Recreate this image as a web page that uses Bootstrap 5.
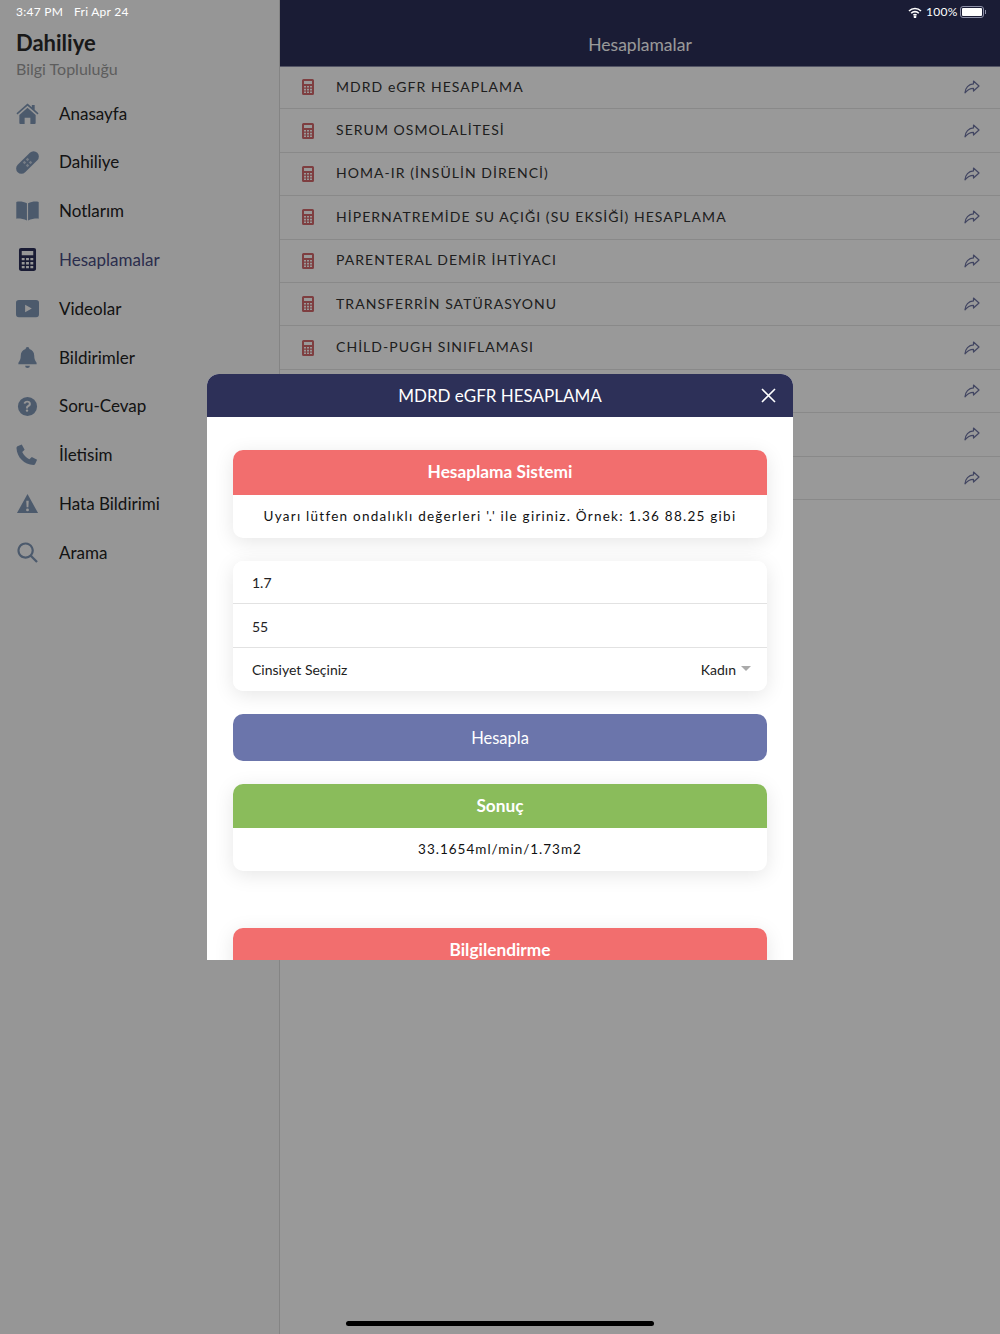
<!DOCTYPE html>
<html lang="tr">
<head>
  <meta charset="UTF-8" />
  <meta name="viewport" content="width=device-width, initial-scale=1.0" />
  <title>Dahiliye</title>
  <link href="https://cdn.jsdelivr.net/npm/bootstrap@5.3.3/dist/css/bootstrap.min.css" rel="stylesheet" />
  <style>
    html, body { height: 100%; }
    body { font-family: "Lato", "Noto Sans", sans-serif; color: #2b2b2b; background: #fff; overflow: hidden; }
    .app-shell { height: 1334px; position: relative; }

    /* left menu */
    .side-menu { width: 280px; background: #fafafa; border-right: 1px solid #dcdcdc; padding-top: 30px; flex-shrink: 0; }
    .side-title { font-size: 22px; font-weight: 700; line-height: 26px; padding-left: 16px; }
    .side-sub { font-size: 16px; line-height: 26px; color: #9c9c9c; padding-left: 16px; margin-bottom: 7px; }
    .side-item { height: 48.8px; padding-left: 16px; font-size: 17px; color: #222; }
    .side-item svg { width: 23px; height: 23px; fill: #7f96b5; margin-right: 20px; flex-shrink: 0; }
    .side-item.is-active { color: #484c80; }
    .side-item.is-active svg { fill: #2c3059; }

    /* right pane */
    .top-head { height: 66px; background: #2c3059; color: #fff; font-size: 17.5px; padding-top: 34px; line-height: 22px; text-align: center; box-shadow: 0 1px 0 #8a8ca8; }
    .calc-row { height: 43.4px; border-bottom: 1px solid #e4e4e4; background: #fff; padding: 0 20px 0 22px; font-size: 14px; letter-spacing: 1.05px; color: #333; }
    .calc-row .calc-icon { width: 12px; height: 16px; fill: #d2686c; margin-right: 22px; flex-shrink: 0; }
    .calc-row .share-icon { width: 16px; height: 14px; fill: none; stroke: #6f75a3; stroke-width: 1.2; stroke-linejoin: round; margin-left: auto; }
    .calc-name { margin-bottom: 2px; }

    /* overlay */
    .dim-layer { position: absolute; inset: 0; background: rgba(0, 0, 0, .4); }
    .status-row { position: absolute; top: 0; left: 16px; right: 0; height: 24px; color: #fff; font-size: 12px; letter-spacing: .25px; }
    .status-date { margin-left: 11px; }
    .batt { width: 24px; height: 12px; border: 1px solid #8d90a8; border-radius: 3px; padding: 1px; margin-left: 2px; }
    .batt span { display: block; height: 100%; background: #fff; border-radius: 1px; }
    .batt-tip { width: 1.5px; height: 4px; background: #8d90a8; margin: 0 14px 0 1px; }
    .home-bar { position: absolute; left: 346px; bottom: 8px; width: 308px; height: 5px; border-radius: 3px; background: #000; }

    /* modal */
    .calc-modal { width: 586px; height: 586px; background: #fff; border-radius: 12px 12px 0 0; overflow: hidden; }
    .calc-modal-head { height: 43px; background: #2d3058; color: #fff; font-size: 17px; position: relative; }
    .close-x { position: absolute; right: 17px; top: 14px; width: 15px; height: 15px; stroke: #fff; stroke-width: 1.6; }
    .calc-modal-body { padding: 33px 26px 0; }
    .pane { border: 0; border-radius: 10px; box-shadow: 0 4px 20px rgba(0, 0, 0, .1); margin-bottom: 23px; overflow: hidden; }
    .pane-head { height: 45px; color: #fff; font-size: 17.3px; font-weight: 700; }
    .pane-coral { background: #f26e6e; padding-bottom: 1px; }
    .pane-green { background: #8abc5b; height: 44px; }
    .pane-text { height: 43px; font-size: 13.5px; letter-spacing: 1.25px; color: #111; }
    .pane-result { letter-spacing: 1px; padding-bottom: 1px; }
    .field-row { height: 43.4px; padding: 1px 16px 0 19px; font-size: 14px; color: #222; border-color: #e2e2e2; }
    .caret-down { width: 0; height: 0; border-left: 5px solid transparent; border-right: 5px solid transparent; border-top: 5px solid #aaa; margin-left: 5px; margin-bottom: 2px; }
    .calc-btn { height: 47px; background: #6b75ab; border: 0; border-radius: 10px; color: #fff; font-size: 16.5px; margin-bottom: 23px; padding-top: 8px; }
    .calc-btn:hover { background: #6b75ab; color: #fff; }
    .gap-after { margin-bottom: 57px; }
  </style>
</head>
<body>
  <svg class="d-none">
    <symbol id="i-calc" viewBox="0 0 12 16"><path d="M1.5 0h9A1.5 1.5 0 0 1 12 1.5v13a1.5 1.5 0 0 1-1.500 1.500h-9A1.500 1.500 0 0 1 0 14.500v-13A1.500 1.500 0 0 1 1.500 0zM2 2v3h8V2zM2 7v1.600h2V7zm3 0v1.600h2V7zm3 0v1.600h2V7zM2 9.800v1.600h2V9.800zm3 0v1.600h2V9.800zm3 0v1.600h2V9.800zM2 12.500v1.500h2v-1.500zm3 0v1.500h2v-1.500zm3 0v1.500h2v-1.500z" fill-rule="evenodd"/></symbol>
    <symbol id="i-share" viewBox="0 0 16 14"><path d="M9.500 1L15 6l-5.500 5V8.300C6 8.300 3.500 9.500 1 12.800 1.300 8 4.500 4.200 9.500 3.900z"/></symbol>
  </svg>

  <div class="app-shell d-flex">
    <nav class="side-menu">
      <div class="side-title">Dahiliye</div>
      <div class="side-sub">Bilgi Topluluğu</div>
      <div class="side-item d-flex align-items-center">
        <svg viewBox="0 0 24 24"><path d="M12 1.500l4.500 4V3h3v5.200l4 3.600-1 1.200L12 4 1.500 13l-1-1.200zM3.500 13.500L12 6l8.500 7.500V22a1 1 0 0 1-1 1H15v-6.500H9V23H4.500a1 1 0 0 1-1-1z"/></svg>Anasayfa
      </div>
      <div class="side-item d-flex align-items-center">
        <svg viewBox="0 0 24 24"><g transform="rotate(-45 12 12)"><rect x="-2.500" y="6.500" width="29" height="11" rx="5.500"/><g fill="#c5d0de"><rect x="8.500" y="8.500" width="2.500" height="2.500"/><rect x="13" y="8.500" width="2.500" height="2.500"/><rect x="8.500" y="13" width="2.500" height="2.500"/><rect x="13" y="13" width="2.500" height="2.500"/></g></g></svg>Dahiliye
      </div>
      <div class="side-item d-flex align-items-center">
        <svg viewBox="0 0 24 24"><path d="M.3 3C4 2.300 8 2.800 11.400 4.500V22.500C8 20.800 4 20.300.3 20.500zM23.700 3C20 2.300 16 2.800 12.600 4.500V22.500c3.400-1.700 7.400-2.200 11.100-2z"/></svg>Notlarım
      </div>
      <div class="side-item is-active d-flex align-items-center">
        <svg viewBox="0 0 24 24"><use href="#i-calc" x="3" y="0" width="18" height="24"/></svg>Hesaplamalar
      </div>
      <div class="side-item d-flex align-items-center">
        <svg viewBox="0 0 24 24"><path fill-rule="evenodd" d="M3 3h18a3 3 0 0 1 3 3v12a3 3 0 0 1-3 3H3a3 3 0 0 1-3-3V6a3 3 0 0 1 3-3zM9.500 8v8l7-4z"/></svg>Videolar
      </div>
      <div class="side-item d-flex align-items-center">
        <svg viewBox="0 0 24 24"><path d="M12 1a2 2 0 0 1 2 2c3.200.8 5 3.500 5 7 0 4 1 5.500 2.500 7.500v1.500h-19v-1.500C4 15.500 5 14 5 10c0-3.500 1.800-6.200 5-7a2 2 0 0 1 2-2zM9.500 20.500h5a2.500 2.500 0 0 1-5 0z"/></svg>Bildirimler
      </div>
      <div class="side-item d-flex align-items-center">
        <svg viewBox="0 0 24 24"><path fill-rule="evenodd" d="M12 2a10 10 0 1 1 0 20 10 10 0 0 1 0-20zm-.3 4c-2 0-3.300 1-3.800 2.600l1.800.8c.3-.9 1-1.500 2-1.500s1.700.5 1.700 1.300c0 .7-.5 1.100-1.300 1.600-1 .6-1.600 1.300-1.600 2.500v.7h2v-.5c0-.6.400-.9 1.100-1.300 1-.7 1.900-1.400 1.900-2.900C15.500 7.200 13.800 6 11.700 6zM11.500 15a1.300 1.300 0 1 0 0 2.600 1.300 1.300 0 0 0 0-2.600z"/></svg>Soru-Cevap
      </div>
      <div class="side-item d-flex align-items-center">
        <svg viewBox="0 0 24 24"><path d="M1.500 3.500L6 1.500 9 7 6.500 9.500c1.500 3.200 4.300 6 7.500 7.500L16.500 14.500 22 17.500l-2 4.500c-.3.600-1 1-1.700 1C8.500 22.500 1 15 .5 5.200c0-.7.400-1.400 1-1.700z"/></svg>İletisim
      </div>
      <div class="side-item d-flex align-items-center">
        <svg viewBox="0 0 24 24"><path fill-rule="evenodd" d="M12 2l11 20H1zM10.700 9l.4 7h1.800l.4-7zM12 17.200a1.500 1.500 0 1 0 0 3 1.500 1.500 0 0 0 0-3z"/></svg>Hata Bildirimi
      </div>
      <div class="side-item d-flex align-items-center">
        <svg viewBox="0 0 24 24"><path fill-rule="evenodd" d="M10 1.500a8.500 8.500 0 0 1 6.800 13.600l6 6-1.700 1.700-6-6A8.500 8.500 0 1 1 10 1.500zm0 2.200a6.300 6.300 0 1 0 0 12.600 6.300 6.300 0 0 0 0-12.600z"/></svg>Arama
      </div>
    </nav>

    <main class="flex-grow-1">
      <div class="top-head position-relative">Hesaplamalar</div>
      <div id="calcList"></div>
    </main>

    <div class="dim-layer d-flex align-items-center justify-content-center">
      <div class="calc-modal">
        <div class="calc-modal-head d-flex align-items-center justify-content-center">
          MDRD eGFR HESAPLAMA
          <svg class="close-x" viewBox="0 0 15 15"><path d="M1 1l13 13M14 1L1 14"/></svg>
        </div>
        <div class="calc-modal-body">
          <div class="card pane">
            <div class="pane-head pane-coral d-flex align-items-center justify-content-center">Hesaplama Sistemi</div>
            <div class="pane-text d-flex align-items-center justify-content-center">Uyarı lütfen ondalıklı değerleri '.' ile giriniz. Örnek: 1.36 88.25 gibi</div>
          </div>
          <div class="card pane">
            <ul class="list-group list-group-flush">
              <li class="list-group-item field-row d-flex align-items-center">1.7</li>
              <li class="list-group-item field-row d-flex align-items-center">55</li>
              <li class="list-group-item field-row d-flex align-items-center justify-content-between">
                <span>Cinsiyet Seçiniz</span>
                <span class="d-flex align-items-center">Kadın<i class="caret-down"></i></span>
              </li>
            </ul>
          </div>
          <button type="button" class="btn calc-btn w-100 d-block">Hesapla</button>
          <div class="card pane gap-after">
            <div class="pane-head pane-green d-flex align-items-center justify-content-center">Sonuç</div>
            <div class="pane-text pane-result d-flex align-items-center justify-content-center">33.1654ml/min/1.73m2</div>
          </div>
          <div class="card pane">
            <div class="pane-head pane-coral d-flex align-items-center justify-content-center">Bilgilendirme</div>
          </div>
        </div>
      </div>
    </div>

    <div class="status-row d-flex align-items-center">
      <span>3:47 PM</span><span class="status-date">Fri Apr 24</span>
      <svg class="ms-auto me-1" width="14" height="11" viewBox="0 0 14 11" fill="none" stroke="#fff" stroke-width="1.600"><path d="M1 4a8.500 8.500 0 0 1 12 0M3.200 6.200a5.400 5.400 0 0 1 7.600 0M5.400 8.300a2.300 2.300 0 0 1 3.200 0"/><circle cx="7" cy="9.800" r=".6" fill="#fff"/></svg>
      <span>100%</span>
      <div class="batt"><span></span></div><div class="batt-tip"></div>
    </div>
    <div class="home-bar"></div>
  </div>

  <script>
    // last three rows sit behind the modal, their labels can't be read
    const items = ['MDRD eGFR HESAPLAMA', 'SERUM OSMOLALİTESİ', 'HOMA-IR (İNSÜLİN DİRENCİ)',
      'HİPERNATREMİDE SU AÇIĞI (SU EKSİĞİ) HESAPLAMA', 'PARENTERAL DEMİR İHTİYACI',
      'TRANSFERRİN SATÜRASYONU', 'CHİLD-PUGH SINIFLAMASI', '', '', ''];
    document.getElementById('calcList').innerHTML = items.map(name => `
      <div class="calc-row d-flex align-items-center">
        <svg class="calc-icon"><use href="#i-calc"/></svg>
        <span class="calc-name">${name}</span>
        <svg class="share-icon"><use href="#i-share"/></svg>
      </div>`).join('');
  </script>
  <script src="https://cdn.jsdelivr.net/npm/bootstrap@5.3.3/dist/js/bootstrap.bundle.min.js"></script>
</body>
</html>
